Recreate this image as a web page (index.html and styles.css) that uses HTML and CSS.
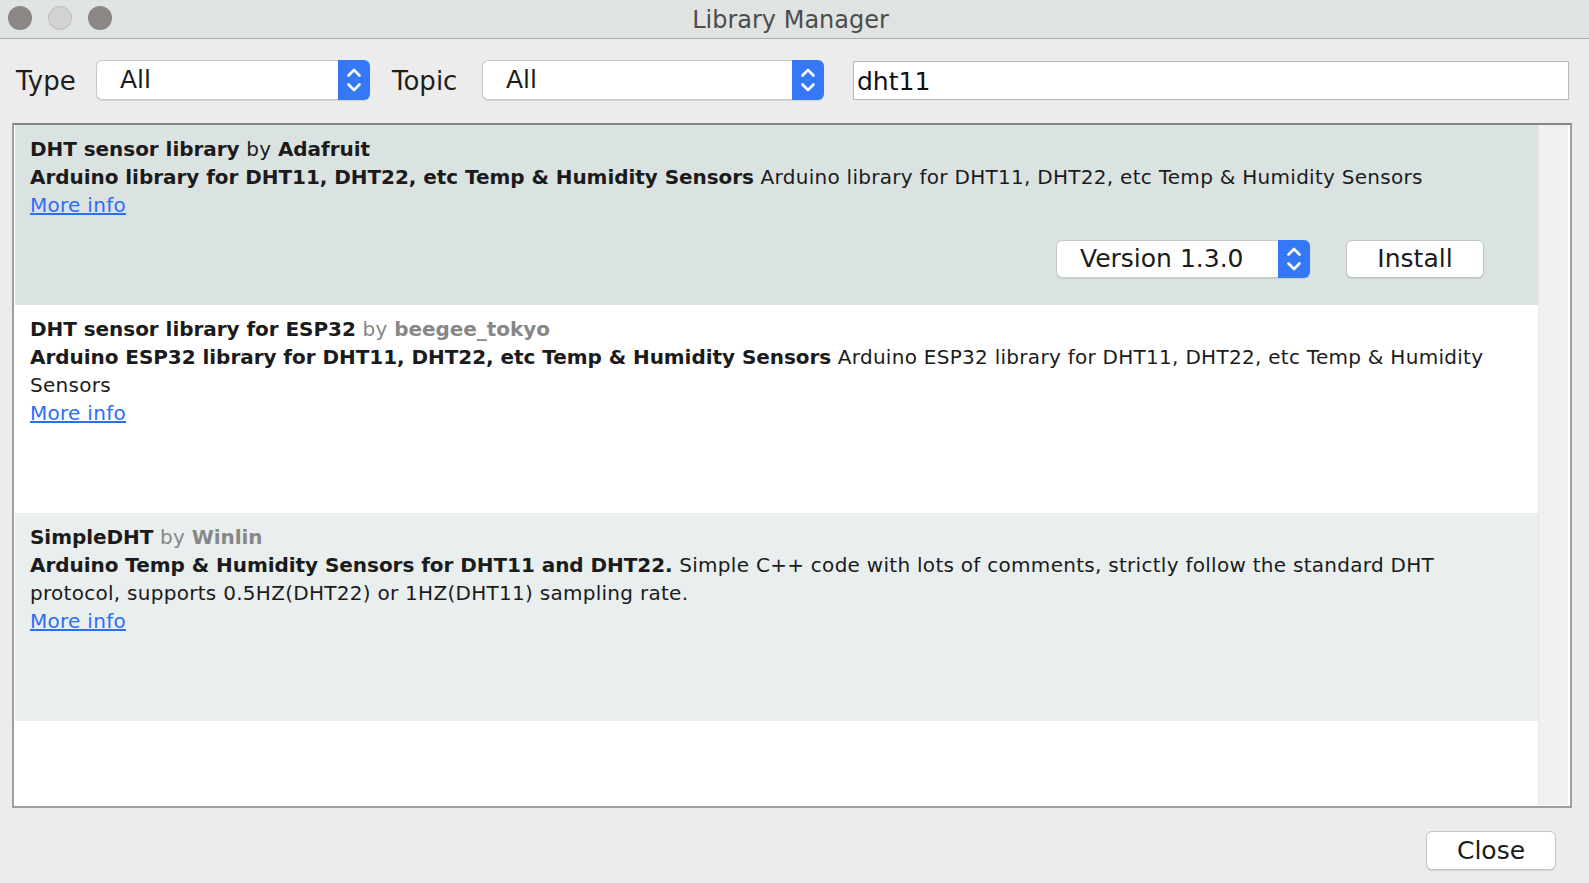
FILE: index.html
```html
<!DOCTYPE html>
<html>
<head>
<meta charset="utf-8">
<title>Library Manager</title>
<link rel="stylesheet" href="styles.css">
</head>
<body>
<div class="window">
  <div class="titlebar">
    <div class="lights">
      <span class="light dark"></span>
      <span class="light mid"></span>
      <span class="light dark"></span>
    </div>
    <div class="title">Library Manager</div>
    <div></div>
  </div>

  <div class="toolbar">
    <span class="tlabel type-label">Type</span>
    <div class="select select-type">
      <span class="select-text">All</span>
      <span class="select-arrows"><svg width="32" height="40" viewBox="0 0 32 40"><path d="M10.5 15.5 L16 10 L21.5 15.5 M10.5 24.5 L16 30 L21.5 24.5" fill="none" stroke="#fff" stroke-width="2.6" stroke-linecap="round" stroke-linejoin="round"/></svg></span>
    </div>
    <span class="tlabel topic-label">Topic</span>
    <div class="select select-topic">
      <span class="select-text">All</span>
      <span class="select-arrows"><svg width="32" height="40" viewBox="0 0 32 40"><path d="M10.5 15.5 L16 10 L21.5 15.5 M10.5 24.5 L16 30 L21.5 24.5" fill="none" stroke="#fff" stroke-width="2.6" stroke-linecap="round" stroke-linejoin="round"/></svg></span>
    </div>
    <div class="search">dht11</div>
  </div>

  <div class="list">
    <div class="list-content">
      <div class="row selected">
        <div class="line"><b>DHT sensor library</b> by <b>Adafruit</b></div>
        <div class="line"><b>Arduino library for DHT11, DHT22, etc Temp &amp; Humidity Sensors</b> Arduino library for DHT11, DHT22, etc Temp &amp; Humidity Sensors</div>
        <div class="line"><a class="more" href="#">More info</a></div>
        <div class="actions">
          <div class="select select-version">
            <span class="select-text">Version 1.3.0</span>
            <span class="select-arrows"><svg width="32" height="40" viewBox="0 0 32 40"><path d="M10.5 15.5 L16 10 L21.5 15.5 M10.5 24.5 L16 30 L21.5 24.5" fill="none" stroke="#fff" stroke-width="2.6" stroke-linecap="round" stroke-linejoin="round"/></svg></span>
          </div>
          <button class="btn install">Install</button>
        </div>
      </div>

      <div class="row">
        <div class="line"><b>DHT sensor library for ESP32</b> <span class="by">by</span> <b class="author">beegee_tokyo</b></div>
        <div class="line"><b>Arduino ESP32 library for DHT11, DHT22, etc Temp &amp; Humidity Sensors</b> Arduino ESP32 library for DHT11, DHT22, etc Temp &amp; Humidity Sensors</div>
        <div class="line"><a class="more" href="#">More info</a></div>
        <div class="actions"></div>
      </div>

      <div class="row alt">
        <div class="line"><b>SimpleDHT</b> <span class="by">by</span> <b class="author">Winlin</b></div>
        <div class="line"><b>Arduino Temp &amp; Humidity Sensors for DHT11 and DHT22.</b> Simple C++ code with lots of comments, strictly follow the standard DHT protocol, supports 0.5HZ(DHT22) or 1HZ(DHT11) sampling rate.</div>
        <div class="line"><a class="more" href="#">More info</a></div>
        <div class="actions"></div>
      </div>
    </div>
    <div class="scrollbar"></div>
  </div>

  <div class="footer">
    <button class="btn close">Close</button>
  </div>
</div>
</body>
</html>
```

FILE: styles.css
```css
* {
  box-sizing: border-box;
}

body {
  margin: 0;
  background: #ececec;
  font-family: "DejaVu Sans", Verdana, sans-serif;
  color: #1b1b1b;
}

.window {
  height: 883px;
  display: flex;
  flex-direction: column;
}

/* Title bar */
.titlebar {
  height: 39px;
  flex: none;
  border-bottom: 1px solid #acaeae;
  background: #dfe3e2;
  display: grid;
  grid-template-columns: 1fr auto 1fr;
  align-items: center;
}

.lights {
  display: flex;
  gap: 16px;
  padding-left: 8px;
  padding-bottom: 2px;
}

.light {
  width: 24px;
  height: 24px;
  border-radius: 50%;
  background: #8a8784;
}

.light.mid {
  background: #d2d2d2;
  border: 1px solid #bcbcbc;
}

.title {
  font-size: 24px;
  color: #4c4c4c;
  padding-top: 1px;
  margin-right: 8px;
}

/* Toolbar */
.toolbar {
  flex: none;
  display: flex;
  align-items: center;
  padding: 21px 20px 23px 16px;
}

.tlabel {
  font-size: 26px;
  color: #1e1e1e;
  padding-top: 2px;
}

.type-label {
  width: 80px;
}

.topic-label {
  width: 90px;
  margin-left: 22px;
}

.select {
  height: 40px;
  display: flex;
  border-radius: 6px;
  box-shadow: 0 1px 1px rgba(0, 0, 0, 0.1);
  flex: none;
}

.select-type {
  width: 274px;
}

.select-topic {
  width: 342px;
}

.select-text {
  flex: 1;
  background: #fff;
  border: 1px solid #c8c8c8;
  border-right: 0;
  border-radius: 6px 0 0 6px;
  padding-left: 23px;
  font-size: 25px;
  line-height: 37px;
  color: #1b1b1b;
}

.select-arrows {
  width: 32px;
  flex: none;
  background: #3478f6;
  border-radius: 0 6px 6px 0;
  display: flex;
  align-items: center;
  justify-content: center;
  overflow: hidden;
}

.search {
  flex: 1;
  margin-left: 29px;
  margin-top: 1px;
  height: 39px;
  border: 1px solid #b9b9b9;
  background: #fff;
  font-size: 25px;
  line-height: 39px;
  padding-left: 3px;
  color: #111;
}

/* List */
.list {
  flex: none;
  height: 685px;
  margin: 0 17px 0 12px;
  display: flex;
  background: #fff;
  border: 2px solid #9e9e9e;
  border-top-color: #868686;
  padding: 0 2px 1px 1px;
}

.list-content {
  flex: 1;
  display: flex;
  flex-direction: column;
}

.scrollbar {
  width: 30px;
  flex: none;
  background: #f0f0f0;
  border-left: 1px solid #e6e6e6;
}

.row {
  padding: 10px 33px 0 15px;
  font-size: 20px;
  line-height: 28px;
  letter-spacing: 0.28px;
  color: #1b1b1b;
}

.row.selected {
  background: #dbe3e2;
}

.row.alt {
  background: #e9eeee;
}

.row b {
  font-weight: bold;
  letter-spacing: -0.05px;
}

.by,
.author {
  color: #878787;
}

.more {
  color: #2f6df6;
  text-decoration: underline;
}

.actions {
  height: 86px;
  padding-top: 21px;
  padding-right: 21px;
  display: flex;
  justify-content: flex-end;
  align-items: flex-start;
  gap: 36px;
  letter-spacing: 0;
}

.select-version {
  width: 254px;
  height: 38px;
}

.select-version .select-text {
  line-height: 35px;
}

.btn {
  font-family: "DejaVu Sans", Verdana, sans-serif;
  font-size: 25px;
  color: #1b1b1b;
  background: #fff;
  border: 1px solid #c4c4c4;
  border-radius: 6px;
  box-shadow: 0 1px 1px rgba(0, 0, 0, 0.1);
  padding: 0;
  line-height: 34px;
}

.install {
  width: 138px;
  height: 38px;
}

/* Footer */
.footer {
  flex: none;
  display: flex;
  justify-content: flex-end;
  padding: 23px 33px 0 0;
}

.close {
  width: 130px;
  height: 39px;
}
```
